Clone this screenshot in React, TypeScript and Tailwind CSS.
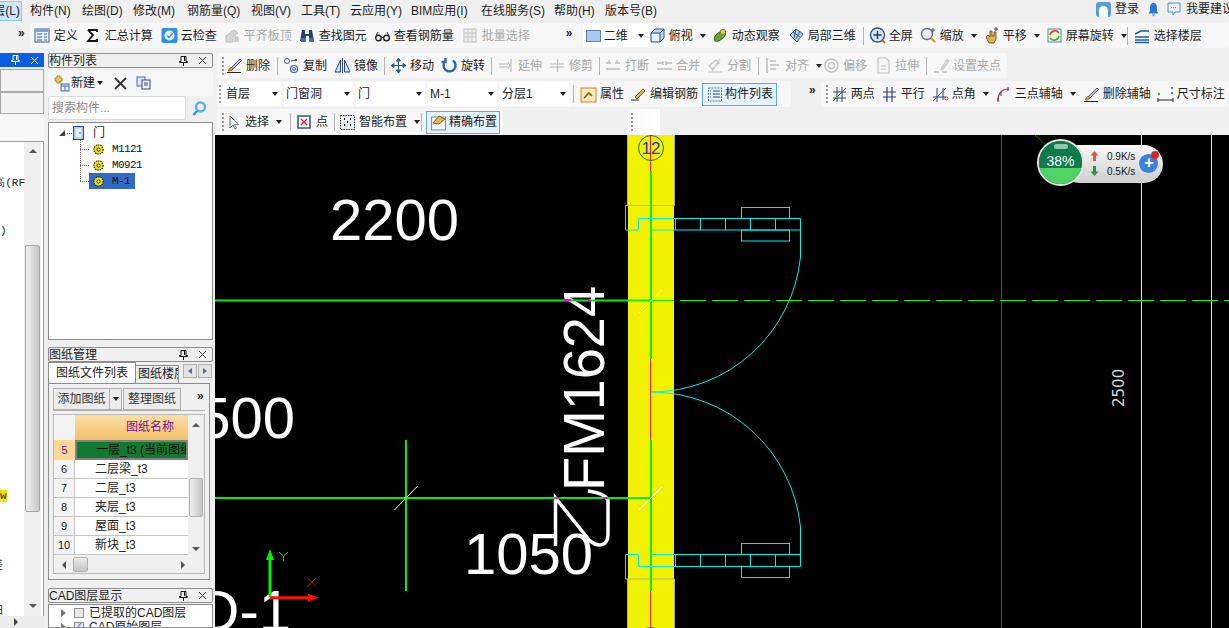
import { ReactNode } from 'react';

const FONT = "font-['Liberation_Sans','Noto_Sans_CJK_SC',sans-serif]";

function Svg({ children }: { children: ReactNode }) {
  return (
    <svg width="17" height="17" viewBox="0 0 17 17" fill="none" className="shrink-0">
      {children}
    </svg>
  );
}

// toolbar icons, simplified from the bitmap ones in the app
const ICONS: Record<string, ReactNode> = {
  define: (
    <>
      <rect x="1" y="2" width="14" height="13" fill="#eaf1fb" stroke="#3c5f94" />
      <rect x="1" y="2" width="14" height="3" fill="#7fa3d6" />
      <path d="M3 7h5M3 10h5M3 13h5M10 7h3M10 10h3M10 13h3" stroke="#3c5f94" />
    </>
  ),
  sigma: <path d="M3 3h9v2M3 3l5 5-5 6h9v-2" stroke="#111" strokeWidth="1.8" />,
  cloud: (
    <>
      <rect x="0.5" y="1" width="16" height="15" rx="2" fill="#2f8fe0" />
      <circle cx="8.5" cy="8.5" r="5" fill="#eaf6ff" />
      <path d="M6 8.5l2 2 3.5-4" stroke="#2f8fe0" strokeWidth="1.5" />
    </>
  ),
  level: (
    <>
      <path d="M2 15V9l8-6 4 3-5 4v5z" fill="#d5d5d5" stroke="#bdbdbd" />
      <path d="M11 15v-5h3v5" fill="#cfcfcf" stroke="#bdbdbd" />
    </>
  ),
  binoc: (
    <>
      <path d="M3 3h3v4h4V3h3l2 11H10V9H7v5H1z" fill="#27406b" />
      <rect x="2" y="11" width="5" height="4" fill="#4a6ca8" />
      <rect x="10" y="11" width="5" height="4" fill="#4a6ca8" />
    </>
  ),
  glasses: (
    <>
      <circle cx="4.5" cy="11" r="2.8" stroke="#222" strokeWidth="1.4" />
      <circle cx="12.5" cy="11" r="2.8" stroke="#222" strokeWidth="1.4" />
      <path d="M7 10.5h3M2 9l2-4M15 9l-2-4" stroke="#222" />
    </>
  ),
  batch: (
    <>
      <rect x="2" y="2" width="12" height="13" fill="#efefef" stroke="#c4c4c4" />
      <path d="M2 6h12M2 10h12M6 2v13M10 2v13" stroke="#c4c4c4" />
    </>
  ),
  topview: (
    <>
      <path d="M2 6l4-4h9v9l-4 4H2z" fill="#bcd7f2" stroke="#2e5a8f" />
      <path d="M2 6h9v9M11 6l4-4" stroke="#2e5a8f" />
      <rect x="3" y="7" width="7" height="7" fill="#e7f2fc" />
    </>
  ),
  orbit: (
    <>
      <ellipse cx="8" cy="9" rx="7" ry="3.5" transform="rotate(-40 8 9)" fill="#6fa236" stroke="#3f6b1b" />
      <circle cx="11" cy="5" r="2.6" fill="#d9d24a" stroke="#7d7a20" />
    </>
  ),
  local3d: (
    <>
      <path d="M2 8l6-6 7 5-6 8z" fill="#bcd2ea" stroke="#36597f" />
      <path d="M5 5l7 5M8 2l-2 9M12 4l-4 8" stroke="#36597f" />
    </>
  ),
  fullscreen: (
    <>
      <circle cx="8.5" cy="8" r="7" fill="#d8e4f4" stroke="#33517d" strokeWidth="1.4" />
      <path d="M8.5 4v8M4.5 8h8" stroke="#1e3a68" strokeWidth="1.4" />
      <path d="M13 13l3 3" stroke="#a8741c" strokeWidth="2" />
    </>
  ),
  zoom: (
    <>
      <circle cx="7" cy="7" r="5.5" fill="#e6edf6" stroke="#5e6f86" strokeWidth="1.4" />
      <path d="M11 11l4 4" stroke="#c9a22c" strokeWidth="2.4" />
      <path d="M13 1v4M11 3h4" stroke="#555" />
    </>
  ),
  pan: (
    <>
      <path d="M3 10l2-2 2 2V4h2v5h2V5h2v7l-2 4H6z" fill="#d8b45e" stroke="#7c5d1a" />
      <path d="M13 0v4M11 2h4" stroke="#444" />
    </>
  ),
  rotateScreen: (
    <>
      <rect x="2" y="2" width="13" height="13" fill="#f8f4c8" stroke="#3d8fc6" />
      <path d="M4 8a5 5 0 0 1 9-2" stroke="#d83a2a" strokeWidth="1.5" />
      <path d="M13 9a5 5 0 0 1-9 2" stroke="#3aa843" strokeWidth="1.5" />
    </>
  ),
  floors: (
    <path d="M1 7l6-3h8M1 10h14M1 13h14M1 15.5h14" stroke="#1a5fa0" strokeWidth="1.6" />
  ),
  brush: (
    <>
      <path d="M5 11L14 2l1.5 1.5L7 12z" fill="#c8c0dc" stroke="#5a4a86" />
      <path d="M6 10.5c-2 0-3 1.5-3.5 3.5 2 0 4-.5 4.5-2.5z" fill="#e0a33c" stroke="#8a5a12" />
      <path d="M1 15.5h14" stroke="#222" />
    </>
  ),
  copy: (
    <>
      <circle cx="4" cy="4" r="2.5" stroke="#3a5f8f" />
      <circle cx="11" cy="12" r="3.5" stroke="#3a5f8f" strokeWidth="1.2" />
      <circle cx="11" cy="12" r="1.5" stroke="#3a5f8f" />
      <path d="M8 4l6-1M12 2l2 1-2 1" stroke="#444" />
    </>
  ),
  mirror: (
    <>
      <path d="M8.5 1v15" stroke="#2c4a7c" />
      <path d="M6.5 3v12H1zM10.5 3v12H16z" fill="#cfe0f5" stroke="#2c4a7c" />
    </>
  ),
  move: (
    <path d="M8.5 1v15M1 8.5h15M8.5 1L6.5 4h4zM8.5 16l-2-3h4zM1 8.5l3-2v4zM16 8.5l-3-2v4z" fill="#2c5a9c" stroke="#2c5a9c" />
  ),
  rotate: <path d="M12 3.5A6 6 0 1 1 4.5 4M4.5 1v4h-4" stroke="#2a62c4" strokeWidth="2.4" />,
  extend: <path d="M1 7h9M1 10h9M13 2v13M10 5l2 3.5-2 3.5" stroke="#bdbdbd" strokeWidth="1.2" />,
  trim: <path d="M1 7h14M1 10h14M8.5 2v13" stroke="#bdbdbd" strokeWidth="1.2" />,
  breakLine: <path d="M1 6h5M10 6h5M1 12h14M4 3v3M12 3v3" stroke="#bdbdbd" strokeWidth="1.4" />,
  merge: <path d="M1 6h6M10 6h6M1 12h15M7 4v4M10 4v4" stroke="#bdbdbd" strokeWidth="1.4" />,
  split: <path d="M1 15h14M2 9l7-6 3 3-7 6zM13 2l-8 12" stroke="#c4c4c4" strokeWidth="1.2" />,
  align: <path d="M2 1v15M5 4h6M5 8h9M5 12h6" stroke="#bdbdbd" strokeWidth="1.6" />,
  offset: (
    <>
      <circle cx="8.5" cy="8.5" r="6.5" stroke="#c4c4c4" strokeWidth="1.5" />
      <circle cx="8.5" cy="8.5" r="3" stroke="#c4c4c4" strokeWidth="1.5" />
    </>
  ),
  stretch: <path d="M3 1h8l3 3v12H3zM6 9h5M6 12h5" stroke="#c4c4c4" strokeWidth="1.2" />,
  grip: <path d="M1 15h5M8 12l6-9 1.5 1-6 9zM9 15h5" stroke="#c4c4c4" strokeWidth="1.3" />,
  props: (
    <>
      <rect x="1" y="2" width="15" height="14" fill="#fbe7b8" stroke="#c88a2e" />
      <path d="M4 12l5-5 3 3" stroke="#7c5a16" strokeWidth="1.6" />
    </>
  ),
  editRebar: (
    <>
      <path d="M1 14h8" stroke="#222" />
      <path d="M5 11L13 3l2 2-8 8z" fill="#e8b04a" stroke="#7c5a16" />
    </>
  ),
  compList: (
    <>
      <path d="M1.5 2h13v13h-13z" stroke="#5c7ea8" strokeDasharray="2 1" />
      <path d="M6 5h7M6 8h7M6 11h7" stroke="#2c4a7c" />
      <path d="M3 5h1M3 8h1M3 11h1" stroke="#2c4a7c" />
    </>
  ),
  twoPoint: (
    <>
      <path d="M2 6h13M2 12h13M6 1v15M11 1v15" stroke="#27408b" />
      <path d="M2 15L15 2" stroke="#d02020" />
      <circle cx="6" cy="11" r="1.4" fill="#3aa843" />
    </>
  ),
  parallel: <path d="M2 6h13M2 11h13M6 1v15M11 1v15" stroke="#27408b" strokeWidth="1.2" />,
  angle: (
    <>
      <path d="M1 11h13M5 2v14M11 2v12" stroke="#27408b" />
      <path d="M1 15L14 2" stroke="#d02020" />
      <circle cx="14.5" cy="12.5" r="1.5" stroke="#d02020" />
    </>
  ),
  threePoint: (
    <>
      <path d="M3 15C3 7 7 3 14 3" stroke="#d02020" strokeWidth="1.2" />
      <path d="M3 12v4M6 6v4M13 1v4" stroke="#27408b" />
    </>
  ),
  dimension: (
    <>
      <path d="M1 14h15M1 12v4M16 12v4" stroke="#222" />
      <path d="M1 8h2M14 2h2M14 7h2" stroke="#3aa843" strokeWidth="2" />
    </>
  ),
  cursor: <path d="M5 2v12l3-3 2 4 1.5-.7-2-4h4z" fill="#fff" stroke="#5c6c84" />,
  point: (
    <>
      <rect x="2" y="2" width="12" height="12" fill="#fff" stroke="#27408b" strokeWidth="1.4" />
      <path d="M5 5l6 6M11 5l-6 6" stroke="#d02020" strokeWidth="1.4" />
    </>
  ),
  smart: (
    <>
      <rect x="1.5" y="1.5" width="14" height="14" fill="#e8edf5" stroke="#333" strokeDasharray="1.5 1" />
      <path d="M5 5h1M11 5h1M5 11h1M11 11h1M8 8h1" stroke="#111" strokeWidth="2" />
    </>
  ),
  exact: (
    <>
      <rect x="1.5" y="3" width="14" height="13" fill="#f3f6fb" stroke="#6f8db5" />
      <path d="M3 9l6-7 6 3-6 5z" fill="#e4b450" stroke="#8a6420" />
    </>
  ),
};

function Tool({ icon, label, w, off, caret }: { icon: string; label: string; w: string; off?: boolean; caret?: boolean }) {
  return (
    <div className={`flex items-center shrink-0 ${w}`}>
      <span className="w-[20px] shrink-0">
        <Svg>{ICONS[icon]}</Svg>
      </span>
      <span className={`whitespace-nowrap ${off ? 'text-[#a8a8a8]' : 'text-[#1c1c1c]'}`}>{label}</span>
      {caret && <Caret className="ml-[7px]" />}
    </div>
  );
}

function Caret({ className = '' }: { className?: string }) {
  return <span className={`shrink-0 w-0 h-0 border-x-[3px] border-x-transparent border-t-[4px] border-t-[#222] ${className}`} />;
}

function Sep({ className = '' }: { className?: string }) {
  return <span className={`w-px h-[18px] bg-[#b5b5b5] shrink-0 ${className}`} />;
}

function Gripper({ className = '' }: { className?: string }) {
  return <span className={`w-[2px] h-[18px] shrink-0 border-l-2 border-dotted border-[#9a9a9a] ${className}`} />;
}

function Chevrons({ className = '' }: { className?: string }) {
  return <span className={`text-[12px] leading-none font-bold text-[#222] shrink-0 ${className}`}>»</span>;
}

function Combo({ label, w }: { label: string; w: string }) {
  return (
    <div className={`h-[24px] bg-white flex items-center justify-between pl-[2px] pr-[3px] shrink-0 ${w}`}>
      <span className="whitespace-nowrap">{label}</span>
      <Caret />
    </div>
  );
}

function Pin({ color = '#111' }: { color?: string }) {
  return (
    <svg width="9" height="10" viewBox="0 0 9 10" fill="none" className="shrink-0">
      <path d="M2 0.5h5v5h1.5v1h-8v-1H2zM4.5 6.5V10M5.5 1v4" stroke={color} />
    </svg>
  );
}

function Cross({ color = '#333' }: { color?: string }) {
  return (
    <svg width="9" height="9" viewBox="0 0 9 9" fill="none" className="shrink-0">
      <path d="M1 1l7 7M8 1L1 8" stroke={color} />
    </svg>
  );
}

function PanelTitle({ title }: { title: string }) {
  return (
    <div className="h-[15px] shrink-0 border border-[#8d8d8d] rounded-[2px] bg-[#f0f0f0] flex items-center justify-between pr-[5px] overflow-hidden">
      <span className="whitespace-nowrap leading-none">{title}</span>
      <div className="flex items-center gap-[10px]">
        <Pin />
        <Cross />
      </div>
    </div>
  );
}

function GearRow({ name, selected }: { name: string; selected?: boolean }) {
  return (
    <div className="h-[16px] flex items-center pl-[31px] relative">
      <span className="absolute left-[31px] -top-[8px] h-[16px] border-l border-dotted border-[#666]" />
      <span className="w-[9px] border-t border-dotted border-[#666]" />
      <div className={`flex items-center h-[16px] pl-[4px] pr-[5px] gap-[8px] ${selected ? 'bg-[#316ac5]' : ''}`}>
        <svg width="11" height="11" viewBox="0 0 11 11" className="shrink-0">
          <circle cx="5.5" cy="5.5" r="4.6" fill="#f5e400" stroke="#222" strokeWidth="1.2" strokeDasharray="1.4 0.9" />
          <circle cx="5.5" cy="5.5" r="1.6" fill="#fff" stroke="#222" />
        </svg>
        <span className="font-['Liberation_Mono',monospace] text-[11px] tracking-[-0.6px] text-[#111]">{name}</span>
      </div>
    </div>
  );
}

function SheetRow({ n, name }: { n: number; name: string }) {
  return (
    <div className="h-[19px] shrink-0 flex border-b border-[#c4c4c4]">
      <div className="w-[21px] shrink-0 bg-[#f3f3f3] border-r border-[#c4c4c4] text-center text-[11px] leading-[18px]">{n}</div>
      <div className="flex-1 bg-white pl-[20px] leading-[18px] whitespace-nowrap text-[#222]">{name}</div>
    </div>
  );
}

function Canvas() {
  const ticks = (top: number, bottom: number) =>
    [675.5, 700.5, 725.5, 750.5, 775.5].map((x) => <path key={x} d={`M${x} ${top}V${bottom}`} />);

  return (
    <svg width="1014" height="493" viewBox="215 135 1014 493" className="block bg-black">
      <rect x="628" y="135" width="46" height="493" fill="#f2f200" />
      <path d="M627.5 135V205.5H674.5V135M627.5 628V579H674.5V628" stroke="#b0b0a0" fill="none" />

      <path d="M1001.5 135V628" stroke="#0a8a0a" />
      <path d="M1141.5 135V628M1211.5 135V628" stroke="#ffff20" />
      <path d="M1035 135L1047 146" stroke="#0a7a0a" />

      <g fill="#fff" fontFamily="'Liberation Sans',sans-serif" fontSize="58">
        <text x="330" y="240">2200</text>
        <text x="295" y="438" textAnchor="end">1500</text>
        <text x="464" y="574">1050</text>
        <text x="291" y="631" textAnchor="end">D-1</text>
        <text transform="translate(604 491) rotate(-90)" textLength="205" lengthAdjust="spacingAndGlyphs">FM1624</text>
        <text transform="translate(1124 407) rotate(-90)" fontSize="15" fontFamily="'DejaVu Sans',sans-serif" fill="#d8d8d8">2500</text>
      </g>
      <path d="M555.5 546V498L590 541C598 547 608 547 608 534V500C605 494 596 492 588 491" stroke="#fff" strokeWidth="3.5" fill="none" />

      <path d="M215 300.5H651M215 498H651M651 171V359M651 440V591M406 440V591" stroke="#00f000" strokeWidth="2" />
      <path d="M651 300.5H674" stroke="#00f000" />
      <path d="M680 300.5H1229" stroke="#00ff00" strokeDasharray="26 6" />
      <path d="M650.5 135V171M650.5 359V440M650.5 591V628" stroke="#ff2020" />
      <path d="M564 300H571M588 300H591M555 498H560M603 498H608" stroke="#f010f0" strokeWidth="2" />
      <path d="M639 312.7L662 290M639 509.7L662 487M394.3 510L417.7 486" stroke="#fff" />

      <circle cx="651" cy="148" r="12.5" stroke="#107a10" fill="none" />
      <circle cx="651" cy="640" r="12.5" stroke="#107a10" fill="none" />
      <text x="651" y="154" textAnchor="middle" fontFamily="'Liberation Sans',sans-serif" fontSize="17" fill="#3030d8">12</text>

      <g stroke="#00f0f0" fill="none">
        {/* upper door leaf */}
        <path d="M800.5 218.5H638.5V230H625.5V205.5H628" />
        <path d="M651 230H800.5V257" />
        <path d="M800.5 218.5V230" />
        {ticks(218.5, 230)}
        <rect x="741.5" y="207.5" width="48" height="11" />
        <rect x="741.5" y="230" width="48" height="11" />
        <path d="M800.5 257A150 150 0 0 1 651 392" />
        {/* lower door leaf */}
        <path d="M651 554.5H800.5" />
        <path d="M800.5 527V566.5H638.5V554.5H625.5V579H628" />
        {ticks(554.5, 566.5)}
        <rect x="741.5" y="543.5" width="48" height="11" />
        <rect x="741.5" y="566.5" width="48" height="11" />
        <path d="M651 392A150 150 0 0 1 800.5 527" />
      </g>

      <path d="M270 597V556" stroke="#00f000" strokeWidth="3" />
      <path d="M270 549l4 11h-8z" fill="#00f000" />
      <path d="M270 597.7H308" stroke="#ff1010" strokeWidth="3" />
      <path d="M319 597.7l-11-4v8z" fill="#ff1010" />
      <path d="M279 552l4.5 4 4.5-4M283.5 556v5" stroke="#00e000" fill="none" />
      <path d="M307.5 578l8.5 8.5M316 578l-8.5 8.5" stroke="#e01010" />
    </svg>
  );
}

function NetWidget() {
  return (
    <div className="absolute left-[822px] top-[2px] w-[126px] h-[50px] flex items-center">
      <div className="absolute left-[23px] top-[8px] w-[103px] h-[38px] rounded-full bg-gradient-to-b from-[#f8f8f8] to-[#cfcfcf]" />
      <div className="relative w-[47px] h-[47px] rounded-full border-2 border-[#e2e2e2] overflow-hidden flex flex-col shrink-0 bg-[#0f7a4a]">
        <span className="absolute left-[15px] top-[3px] w-[14px] h-[5px] rounded-full bg-[#8fc8a8]" />
        <div className="h-[27px] w-full shrink-0 bg-[#0f7a4a]" />
        <div className="flex-1 w-full bg-[#4fd266]" />
        <span className="absolute inset-x-0 top-[12px] text-center text-white text-[14px] leading-[16px] whitespace-nowrap">38%</span>
      </div>
      <div className="relative flex flex-col gap-[2px] ml-[6px] mt-[3px] text-[10px] leading-[13px] text-[#111]">
        <div className="flex items-center">
          <svg width="9" height="10" viewBox="0 0 9 10" className="mr-[8px] shrink-0">
            <path d="M4.5 0L8.5 4.5H6V10H3V4.5H0.5z" fill="#e05a48" />
          </svg>
          0.9K/s
        </div>
        <div className="flex items-center">
          <svg width="9" height="10" viewBox="0 0 9 10" className="mr-[8px] shrink-0">
            <path d="M4.5 10L8.5 5.5H6V0H3V5.5H0.5z" fill="#2f8f4a" />
          </svg>
          0.5K/s
        </div>
      </div>
      <div className="relative ml-[4px] mt-[3px] w-[19px] h-[19px] rounded-full bg-[#3b82dc] text-white text-[16px] leading-[18px] text-center font-bold shrink-0">
        +
        <span className="absolute right-[-1px] top-[-3px] w-[8px] h-[8px] rounded-full bg-[#d8262c]" />
      </div>
    </div>
  );
}

function LeftStub() {
  return (
    <div className="w-[44px] shrink-0 flex flex-col overflow-hidden">
      <div className="h-[14px] bg-[#0a5ee6] flex items-center justify-end gap-[10px] pr-[5px]">
        <Pin color="#fff" />
        <Cross color="#fff" />
      </div>
      <div className="h-[23px] mt-[2px] border border-[#a8a8a8] bg-[#f2f2f2]" />
      <div className="h-[22px] border border-[#a8a8a8] bg-[#f2f2f2]" />
      <div className="h-[27px] bg-[#f8f8f8]" />
      <div className="relative flex-1 bg-white border-t border-r border-[#9a9a9a] flex justify-end">
        <div className="w-[17px] mr-[2px] bg-[#efefef] flex flex-col items-center">
          <span className="mt-[7px] w-0 h-0 border-x-[4px] border-x-transparent border-b-[4px] border-b-[#555]" />
          <div className="mt-[92px] w-[15px] h-[267px] bg-gradient-to-r from-[#f0f0f0] to-[#c8c8c8] border border-[#a8a8a8] rounded-[2px]" />
          <span className="mt-[92px] w-0 h-0 border-x-[4px] border-x-transparent border-t-[4px] border-t-[#555]" />
        </div>
        <span className="absolute right-[18px] top-[33px] font-['Liberation_Mono',monospace] text-[11px] whitespace-nowrap">高(RF</span>
        <span className="absolute left-0 top-[81px] font-['Liberation_Mono',monospace] text-[11px]">)</span>
        <span className="absolute left-0 top-[348px] bg-[#f5e400] font-['Liberation_Mono',monospace] text-[11px] leading-[12px]">w</span>
        <span className="absolute -left-[8px] top-[415px] text-[11px]">差</span>
        <span className="absolute -left-[8px] top-[460px] text-[11px]">田</span>
      </div>
      <div className="h-[12px] bg-[#ececec] flex items-center pl-[14px]">
        <span className="w-0 h-0 border-y-[4px] border-y-transparent border-l-[4px] border-l-[#444]" />
      </div>
    </div>
  );
}

function ComponentPanel() {
  return (
    <div className="h-[287px] shrink-0 flex flex-col">
      <PanelTitle title="构件列表" />
      <div className="h-[26px] mt-[2px] bg-[#f6f6f6] rounded-[2px] flex items-center pl-[5px]">
        <svg width="17" height="17" viewBox="0 0 17 17" className="shrink-0">
          <path d="M2 3h2V1h3v2h2v3H7v2H4V6H2z" fill="#f2d24a" stroke="#a8862a" />
          <rect x="8" y="9" width="8" height="7" fill="#eaf0fa" stroke="#4a6ca8" />
          <path d="M8 11h8M12 11v5" stroke="#4a6ca8" />
        </svg>
        <span className="ml-[1px]">新建</span>
        <Caret className="ml-[2px]" />
        <svg width="13" height="13" viewBox="0 0 13 13" className="ml-[11px] shrink-0">
          <path d="M1 1l11 11M12 1L1 12" stroke="#333" strokeWidth="1.8" />
        </svg>
        <svg width="15" height="14" viewBox="0 0 15 14" className="ml-[9px] shrink-0">
          <rect x="1" y="1" width="8" height="9" fill="#dbe7f7" stroke="#4a6ca8" />
          <rect x="6" y="4" width="8" height="9" fill="#f3f7fc" stroke="#2c4a7c" />
          <path d="M8 7h4M8 9h4" stroke="#2c4a7c" />
        </svg>
      </div>
      <div className="h-[24px] flex items-center">
        <div className="w-[138px] h-[24px] bg-white border border-[#dcdcdc] rounded-[2px] pl-[3px] leading-[22px] text-[#8c8c8c]">搜索构件...</div>
        <svg width="15" height="15" viewBox="0 0 15 15" fill="none" className="ml-[6px] shrink-0">
          <circle cx="8.5" cy="6" r="4.5" stroke="#5aaef0" strokeWidth="2.4" />
          <path d="M5 10l-3.5 4" stroke="#2f8fe0" strokeWidth="2.4" />
        </svg>
      </div>
      <div className="flex-1 mt-[2px] bg-white border border-[#8d8d8d] pt-[2px]">
        <div className="h-[16px] flex items-center pl-[10px] relative z-10">
          <span className="w-0 h-0 border-l-[6px] border-l-transparent border-b-[6px] border-b-[#444]" />
          <span className="w-[5px] ml-[2px] border-t border-dotted border-[#666]" />
          <svg width="11" height="14" viewBox="0 0 11 14" className="ml-[1px] shrink-0">
            <rect x="0.5" y="0.5" width="10" height="13" fill="#a8c8f4" stroke="#2a50a0" />
            <rect x="2.5" y="2.5" width="6" height="9" fill="#eaf2fc" />
            <circle cx="7" cy="7" r="0.8" fill="#2a50a0" />
          </svg>
          <span className="ml-[9px]">门</span>
        </div>
        <GearRow name="M1121" />
        <GearRow name="M0921" />
        <GearRow name="M-1" selected />
      </div>
    </div>
  );
}

function SheetPanel() {
  return (
    <div className="mt-[7px] h-[234px] shrink-0 flex flex-col">
      <PanelTitle title="图纸管理" />
      <div className="h-[21px] flex items-end relative">
        <div className="w-[88px] h-[21px] bg-white border border-b-0 border-[#8d8d8d] text-center leading-[20px] z-10 whitespace-nowrap">图纸文件列表</div>
        <div className="w-[43px] h-[18px] bg-[#ececec] border-t border-r border-[#8d8d8d] pl-[2px] overflow-hidden whitespace-nowrap leading-[17px]">图纸楼层</div>
        <div className="absolute right-[1px] top-[2px] flex gap-px">
          <span className="w-[14px] h-[14px] bg-[#e4e4e4] border border-[#b0b0b0] flex items-center justify-center">
            <span className="w-0 h-0 border-y-[3px] border-y-transparent border-r-[4px] border-r-[#4a6ca8]" />
          </span>
          <span className="w-[14px] h-[14px] bg-[#e4e4e4] border border-[#b0b0b0] flex items-center justify-center">
            <span className="w-0 h-0 border-y-[3px] border-y-transparent border-l-[4px] border-l-[#4a6ca8]" />
          </span>
        </div>
      </div>
      <div className="w-[162px] h-[197px] border border-[#8d8d8d] bg-[#f0f0f0] px-[4px] pt-[4px]">
        <div className="h-[23px] flex items-center border-b border-[#b0b0b0] pb-px">
          <span className="w-[57px] h-[22px] border border-[#b0b0b0] bg-[#ececec] text-center leading-[20px] text-[#333]">添加图纸</span>
          <span className="w-[12px] h-[22px] border-y border-r border-[#b0b0b0] bg-[#ececec] flex items-center justify-center"><Caret /></span>
          <span className="w-[58px] h-[22px] ml-px border border-[#b0b0b0] bg-[#ececec] text-center leading-[20px] text-[#333]">整理图纸</span>
          <Chevrons className="ml-[16px] -mt-[6px]" />
        </div>
        <div className="mt-[3px] h-[160px] border border-[#b8b8b8] bg-[#f4f4f4] flex">
          <div className="w-[134px] shrink-0 flex flex-col">
            <div className="h-[25px] shrink-0 flex">
              <div className="w-[21px] bg-[#f3f3f3]" />
              <div className="flex-1 bg-gradient-to-b from-[#fbdda6] to-[#f5c26c] text-[#7a1090] pl-[51px] leading-[25px]">图纸名称</div>
            </div>
            <div className="h-[20px] shrink-0 flex">
              <div className="w-[21px] shrink-0 bg-[#fcd79a] text-[#6a1090] text-center text-[11px] leading-[20px]">5</div>
              <div className="flex-1 overflow-hidden bg-[#127a2e] border-2 border-[#808080] pl-[19px] leading-[16px] whitespace-nowrap text-[#111]">一层_t3 (当前图纸)</div>
            </div>
            <SheetRow n={6} name="二层梁_t3" />
            <SheetRow n={7} name="二层_t3" />
            <SheetRow n={8} name="夹层_t3" />
            <SheetRow n={9} name="屋面_t3" />
            <SheetRow n={10} name="新块_t3" />
            <div className="flex-1" />
            <div className="h-[17px] shrink-0 bg-[#f0f0f0] flex items-center pl-[8px]">
              <span className="w-0 h-0 border-y-[4px] border-y-transparent border-r-[4px] border-r-[#555]" />
              <span className="ml-[7px] w-[15px] h-[15px] bg-gradient-to-b from-[#ececec] to-[#c4c4c4] border border-[#b0b0b0] rounded-[2px]" />
              <span className="ml-[93px] w-0 h-0 border-y-[4px] border-y-transparent border-l-[4px] border-l-[#555]" />
            </div>
          </div>
          <div className="flex-1 flex flex-col items-center bg-[#f0f0f0]">
            <span className="mt-[8px] w-0 h-0 border-x-[4px] border-x-transparent border-b-[4px] border-b-[#555]" />
            <div className="mt-[51px] w-[14px] h-[39px] bg-gradient-to-r from-[#f0f0f0] to-[#c4c4c4] border border-[#b0b0b0] rounded-[2px]" />
            <span className="mt-[30px] w-0 h-0 border-x-[4px] border-x-transparent border-t-[4px] border-t-[#555]" />
          </div>
        </div>
      </div>
    </div>
  );
}

function LayerPanel() {
  return (
    <div className="mt-[7px] flex-1 min-h-0 flex flex-col overflow-hidden">
      <PanelTitle title="CAD图层显示" />
      <div className="flex-1 min-h-0 mt-[1px] bg-white border border-[#8d8d8d] pl-[12px] pt-[1px] overflow-hidden">
        <div className="flex items-center h-[14px]">
          <span className="w-0 h-0 border-y-[4px] border-y-transparent border-l-[5px] border-l-[#777]" />
          <span className="w-[10px] h-[10px] ml-[8px] border border-[#8d8d8d] bg-[#e8e8e8]" />
          <span className="ml-[5px] whitespace-nowrap">已提取的CAD图层</span>
        </div>
        <div className="flex items-center h-[14px]">
          <span className="w-0 h-0 border-y-[4px] border-y-transparent border-l-[5px] border-l-[#777]" />
          <span className="w-[10px] h-[10px] ml-[8px] border border-[#8d8d8d] bg-[#dfe8f5] text-[9px] leading-[9px] text-[#2c4a7c]">✓</span>
          <span className="ml-[5px] whitespace-nowrap">CAD原始图层</span>
        </div>
      </div>
    </div>
  );
}

export default function App() {
  return (
    <div className={`w-[1229px] h-[628px] overflow-hidden bg-[#f0f0f0] flex flex-col text-[12px] text-[#1c1c1c] ${FONT}`}>
      {/* menu bar */}
      <div className="h-[22px] shrink-0 flex items-center relative">
        <div className="w-[22px] h-[20px] bg-[#cde6fb] border-y border-r border-[#8fc6f0] flex items-center justify-end pr-px mr-[8px] shrink-0 overflow-hidden whitespace-nowrap">楼层(L)</div>
        <div className="flex whitespace-nowrap">
          <span className="w-[52px]">构件(N)</span>
          <span className="w-[51px]">绘图(D)</span>
          <span className="w-[54px]">修改(M)</span>
          <span className="w-[64px]">钢筋量(Q)</span>
          <span className="w-[50px]">视图(V)</span>
          <span className="w-[49px]">工具(T)</span>
          <span className="w-[61px]">云应用(Y)</span>
          <span className="w-[70px]">BIM应用(I)</span>
          <span className="w-[73px]">在线服务(S)</span>
          <span className="w-[51px]">帮助(H)</span>
          <span>版本号(B)</span>
        </div>
        <div className="absolute left-[1096px] top-0 h-[18px] flex items-center whitespace-nowrap">
          <span className="w-[15px] h-[15px] rounded-[3px] bg-[#5b9bd5] flex items-end justify-center overflow-hidden">
            <span className="w-[9px] h-[11px] bg-white rounded-t-full" />
          </span>
          <span className="ml-[4px]">登录</span>
          <svg width="11" height="15" viewBox="0 0 11 15" className="ml-[9px]">
            <path d="M5.5 0.5C3 1 2 3 2 6v3l-1.5 2.5h10L9 9V6c0-3-1-5-3.5-5.5z" fill="#2a78d8" />
            <path d="M4 12.5h3L5.5 14.5z" fill="#2a78d8" />
          </svg>
          <svg width="14" height="15" viewBox="0 0 14 15" fill="none" className="ml-[8px]">
            <path d="M1 1h12v9H8l-2 3v-3H1z" stroke="#3a8ce0" />
            <path d="M4 5.5h6" stroke="#3a8ce0" strokeDasharray="1 1" />
          </svg>
          <span className="ml-[5px]">我要建议</span>
        </div>
      </div>

      {/* main toolbar */}
      <div className="h-[25px] mt-px shrink-0 flex items-center">
        <Chevrons className="ml-[18px] mr-[5px] -mt-[6px]" />
        <div className="h-[25px] w-[548px] bg-[#f7f7f7] rounded-[2px] flex items-center pl-[4px]">
          <Tool icon="define" label="定义" w="w-[51px]" />
          <Tool icon="sigma" label="汇总计算" w="w-[76px]" />
          <Tool icon="cloud" label="云检查" w="w-[63px]" />
          <Tool icon="level" label="平齐板顶" w="w-[75px]" off />
          <Tool icon="binoc" label="查找图元" w="w-[75px]" />
          <Tool icon="glasses" label="查看钢筋量" w="w-[88px]" />
          <Tool icon="batch" label="批量选择" w="w-[70px]" off />
          <Chevrons className="ml-[34px] -mt-[6px]" />
        </div>
        <div className="h-[25px] flex-1 bg-[#f7f7f7] rounded-[2px] flex items-center pl-[5px]">
          <div className="w-[66px] h-[23px] bg-white flex items-center pl-[3px] pr-[5px] justify-between shrink-0">
            <span className="flex items-center">
              <span className="w-[15px] h-[12px] bg-[#a9c8ef] border border-[#5c85c0] mr-[3px]" />
              二维
            </span>
            <Caret />
          </div>
          <Tool icon="topview" label="俯视" w="w-[63px]" caret />
          <Tool icon="orbit" label="动态观察" w="w-[76px]" />
          <Tool icon="local3d" label="局部三维" w="w-[75px]" />
          <Sep className="mr-[5px]" />
          <Tool icon="fullscreen" label="全屏" w="w-[51px]" />
          <Tool icon="zoom" label="缩放" w="w-[63px]" caret />
          <Tool icon="pan" label="平移" w="w-[63px]" caret />
          <Tool icon="rotateScreen" label="屏幕旋转" w="w-[81px]" caret />
          <Sep className="mr-[6px]" />
          <Tool icon="floors" label="选择楼层" w="w-[70px]" />
        </div>
      </div>

      <div className="flex-1 flex min-h-0 mt-[5px]">
        {/* docked panels */}
        <div className="w-[215px] shrink-0 flex">
          <LeftStub />
          <div className="w-[165px] ml-[4px] flex flex-col">
            <ComponentPanel />
            <SheetPanel />
            <LayerPanel />
          </div>
        </div>

        {/* right side: tool rows and drawing area */}
        <div className="flex-1 min-w-0 flex flex-col">
          <div className="h-[25px] shrink-0 w-[790px] ml-[2px] bg-[#f7f7f7] rounded-[2px] flex items-center pl-[5px]">
            <Gripper className="mr-[2px]" />
            <Tool icon="brush" label="删除" w="w-[51px]" />
            <Sep className="mr-[5px]" />
            <Tool icon="copy" label="复制" w="w-[51px]" />
            <Tool icon="mirror" label="镜像" w="w-[50px]" />
            <Sep className="mr-[5px]" />
            <Tool icon="move" label="移动" w="w-[51px]" />
            <Tool icon="rotate" label="旋转" w="w-[50px]" />
            <Sep className="mr-[6px]" />
            <Tool icon="extend" label="延伸" w="w-[51px]" off />
            <Tool icon="trim" label="修剪" w="w-[50px]" off />
            <Sep className="mr-[5px]" />
            <Tool icon="breakLine" label="打断" w="w-[51px]" off />
            <Tool icon="merge" label="合并" w="w-[51px]" off />
            <Tool icon="split" label="分割" w="w-[51px]" off />
            <Sep className="mr-[6px]" />
            <Tool icon="align" label="对齐" w="w-[58px]" off caret />
            <Tool icon="offset" label="偏移" w="w-[52px]" off />
            <Tool icon="stretch" label="拉伸" w="w-[51px]" off />
            <Sep className="mr-[6px]" />
            <Tool icon="grip" label="设置夹点" w="w-[68px]" off />
          </div>

          <div className="h-[26px] shrink-0 mt-[3px] ml-[2px] flex items-center">
            <div className="h-[26px] w-[574px] bg-[#f7f7f7] rounded-[2px] flex items-center pl-[2px]">
              <Gripper className="mr-[3px]" />
              <Combo label="首层" w="w-[57px]" />
              <span className="w-[3px]" />
              <Combo label="门窗洞" w="w-[69px]" />
              <span className="w-[3px]" />
              <Combo label="门" w="w-[69px]" />
              <span className="w-[3px]" />
              <Combo label="M-1" w="w-[69px]" />
              <span className="w-[3px]" />
              <Combo label="分层1" w="w-[69px]" />
              <Sep className="ml-[4px] mr-[6px]" />
              <Tool icon="props" label="属性" w="w-[50px]" />
              <Tool icon="editRebar" label="编辑钢筋" w="w-[72px]" />
              <div className="w-[75px] h-[23px] shrink-0 bg-[#e5f3fd] border border-[#5ba7ea] flex items-center pl-[4px]">
                <span className="w-[18px]"><Svg>{ICONS.compList}</Svg></span>
                <span className="whitespace-nowrap">构件列表</span>
              </div>
            </div>
            <Chevrons className="ml-[18px] mr-[5px] -mt-[8px]" />
            <div className="h-[26px] flex-1 bg-[#f7f7f7] rounded-[2px] flex items-center pl-[5px] overflow-hidden">
              <Gripper className="mr-[3px]" />
              <Tool icon="twoPoint" label="两点" w="w-[50px]" />
              <Tool icon="parallel" label="平行" w="w-[51px]" />
              <Tool icon="angle" label="点角" w="w-[63px]" caret />
              <Tool icon="threePoint" label="三点辅轴" w="w-[88px]" caret />
              <Tool icon="brush" label="删除辅轴" w="w-[74px]" />
              <Tool icon="dimension" label="尺寸标注" w="w-[70px]" />
            </div>
          </div>

          <div className="h-[26px] mt-[2px] ml-[2px] flex items-center shrink-0">
            <div className="h-[26px] w-[286px] bg-[#f7f7f7] rounded-[2px] flex items-center pl-[5px] shrink-0">
              <Gripper className="mr-[1px]" />
              <Tool icon="cursor" label="选择" w="w-[65px]" caret />
              <Sep className="mr-[5px]" />
              <Tool icon="point" label="点" w="w-[38px]" />
              <Sep className="mr-[4px]" />
              <Tool icon="smart" label="智能布置" w="w-[82px]" caret />
              <Sep className="mr-[4px]" />
              <div className="w-[74px] h-[23px] shrink-0 bg-[#e5f3fd] border border-[#5ba7ea] flex items-center pl-[3px]">
                <span className="w-[19px]"><Svg>{ICONS.exact}</Svg></span>
                <span className="whitespace-nowrap">精确布置</span>
              </div>
            </div>
            <div className="ml-[125px] w-[32px] h-[26px] bg-gradient-to-r from-[#f8f8f8] to-white rounded-[2px] flex items-center pl-[3px]">
              <Gripper />
            </div>
          </div>

          <div className="relative flex-1 min-h-0 overflow-hidden">
            <Canvas />
            <NetWidget />
          </div>
        </div>
      </div>
    </div>
  );
}
